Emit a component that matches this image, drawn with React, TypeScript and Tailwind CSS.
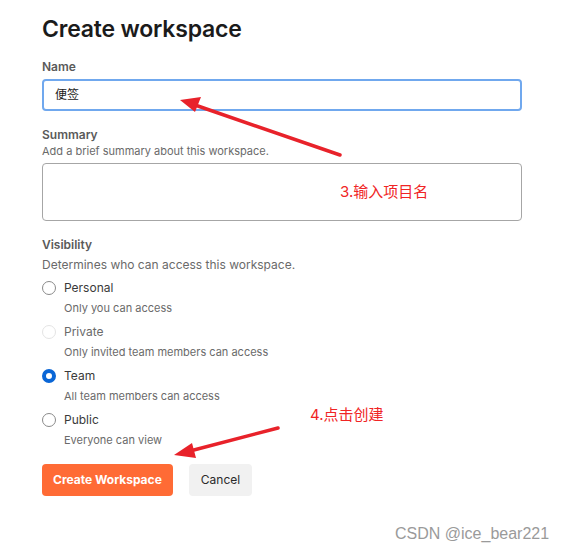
import React from "react";

const options = [
  { label: "Personal", sub: "Only you can access", state: "off" },
  { label: "Private", sub: "Only invited team members can access", state: "disabled" },
  { label: "Team", sub: "All team members can access", state: "on" },
  { label: "Public", sub: "Everyone can view", state: "off" },
];

function Radio({ state }: { state: string }) {
  if (state === "on") {
    return <span className="w-[14px] h-[14px] rounded-full border-[4px] border-[#0a66d6] bg-white shrink-0" />;
  }
  if (state === "disabled") {
    return <span className="w-[14px] h-[14px] rounded-full border border-[#e4e4e4] bg-white shrink-0" />;
  }
  return <span className="w-[14px] h-[14px] rounded-full border border-[#8a8a8a] bg-white shrink-0" />;
}

export default function App() {
  return (
    <div className="relative w-[564px] h-[551px] bg-white overflow-hidden" style={{ fontFamily: "Inter, 'Noto Sans CJK SC', sans-serif" }}>
      <div className="pl-[42px] pr-[42px] pt-[14px]">
        <h1 className="text-[23px] leading-[30px] font-semibold text-[#1b1b1b] tracking-[-0.2px]">Create workspace</h1>

        <div className="mt-[15px] text-[12px] leading-[16px] font-semibold text-[#5a5a5a]">Name</div>
        <div className="mt-[4px] h-[32px] w-[480px] rounded-[4px] border-2 border-[#70a8ee] flex items-center pl-[11px] text-[12px] text-[#1b1b1b]">便签</div>

        <div className="mt-[16px] text-[12px] leading-[16px] font-semibold text-[#5a5a5a]">Summary</div>
        <div className="mt-[1px] text-[11px] leading-[14px] text-[#6a6a6a]">Add a brief summary about this workspace.</div>
        <div className="mt-[5px] h-[58px] w-[480px] rounded-[4px] border border-[#a6a6a6]" />

        <div className="mt-[16px] text-[12px] leading-[16px] font-semibold text-[#5a5a5a]">Visibility</div>
        <div className="mt-[3px] text-[12px] leading-[17px] text-[#6a6a6a]">Determines who can access this workspace.</div>

        <div className="mt-[3px] flex flex-col">
          {options.map((o) => (
            <div key={o.label} className="h-[44px]">
              <div className="flex items-center gap-[8px] h-[24px]">
                <Radio state={o.state} />
                <span className={"text-[12px] " + (o.state === "disabled" ? "text-[#6a6a6a]" : "text-[#3a3a3a]")}>{o.label}</span>
              </div>
              <div className="pl-[22px] text-[11px] leading-[16px] text-[#6a6a6a]">{o.sub}</div>
            </div>
          ))}
        </div>

        <div className="mt-[12px] flex gap-[16px]">
          <button className="h-[32px] px-[11px] rounded-[4px] bg-[#ff6b35] text-white text-[12px] font-bold">Create Workspace</button>
          <button className="h-[32px] px-[12px] rounded-[4px] bg-[#f1f1f1] text-[#2a2a2a] text-[12px]">Cancel</button>
        </div>
      </div>

      <div className="absolute left-[340px] top-[181px] text-[15px] text-[#f02525]">3.输入项目名</div>
      <div className="absolute left-[310px] top-[404px] text-[15px] text-[#f02525]">4.点击创建</div>
      <div className="absolute left-[395px] top-[522px] text-[16px] text-[#9a9a9a]" style={{ fontFamily: "'Liberation Sans', sans-serif" }}>CSDN @ice_bear221</div>

      <svg className="absolute inset-0 pointer-events-none" width="564" height="551">
        <line x1="340" y1="155" x2="195" y2="105" stroke="#e8222a" strokeWidth="3.5" strokeLinecap="round" />
        <polygon points="180,100 201,97 195,112" fill="#e8222a" />
        <line x1="278" y1="428" x2="190" y2="451" stroke="#e8222a" strokeWidth="3.5" strokeLinecap="round" />
        <polygon points="174,455 192,443 196,458" fill="#e8222a" />
      </svg>
    </div>
  );
}
